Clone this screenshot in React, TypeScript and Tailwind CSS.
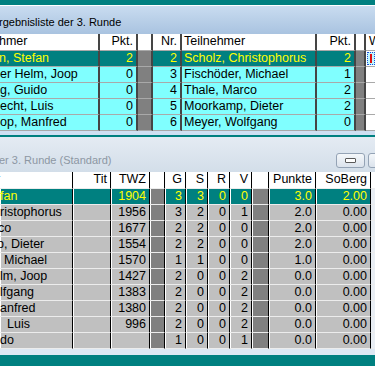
import React from 'react'

// Two overlapping grid windows (Delphi-style string grids) on a teal desktop

interface TopRow { name: string; pkt: string; nr: string; opp: string; oppPkt: string; off?: number }
interface BotRow { name: string; twz: string; g: string; s: string; r: string; v: string; pkt: string; so: string; off?: number }

const topRows: TopRow[] = [
  { name: 'n, Stefan', pkt: '2', nr: '2', opp: 'Scholz, Christophorus', oppPkt: '2', off: -1 },
  { name: 'er Helm, Joop', pkt: '0', nr: '3', opp: 'Fischöder, Michael', oppPkt: '1' },
  { name: 'g, Guido', pkt: '0', nr: '4', opp: 'Thale, Marco', oppPkt: '2' },
  { name: 'echt, Luis', pkt: '0', nr: '5', opp: 'Moorkamp, Dieter', oppPkt: '2' },
  { name: 'op, Manfred', pkt: '0', nr: '6', opp: 'Meyer, Wolfgang', oppPkt: '0' },
]

const botRows: BotRow[] = [
  { name: 'fan', twz: '1904', g: '3', s: '3', r: '0', v: '0', pkt: '3.0', so: '2.00' },
  { name: 'ristophorus', twz: '1956', g: '3', s: '2', r: '0', v: '1', pkt: '2.0', so: '0.00' },
  { name: 'co', twz: '1677', g: '2', s: '2', r: '0', v: '0', pkt: '2.0', so: '0.00', off: -2 },
  { name: 'p, Dieter', twz: '1554', g: '2', s: '2', r: '0', v: '0', pkt: '2.0', so: '0.00', off: -3 },
  { name: 'Michael', twz: '1570', g: '1', s: '1', r: '0', v: '0', pkt: '1.0', so: '0.00', off: 4 },
  { name: 'lm, Joop', twz: '1427', g: '2', s: '0', r: '0', v: '2', pkt: '0.0', so: '0.00' },
  { name: 'lfgang', twz: '1383', g: '2', s: '0', r: '0', v: '2', pkt: '0.0', so: '0.00' },
  { name: 'anfred', twz: '1380', g: '2', s: '0', r: '0', v: '2', pkt: '0.0', so: '0.00' },
  { name: 'Luis', twz: '996', g: '2', s: '0', r: '0', v: '2', pkt: '0.0', so: '0.00', off: 7 },
  { name: 'do', twz: '', g: '1', s: '0', r: '0', v: '1', pkt: '0.0', so: '0.00' },
]

const base = 'h-4 overflow-hidden whitespace-nowrap leading-[15px]'
const c1 = `${base} border-b border-b-[#a9a9a9] border-r-2 border-r-[#454545]`
const c2 = `${base} border-b border-b-[#ececec] border-r border-r-black shadow-[inset_1px_0_0_#ffffff]`

function Name({ text, off = 0 }: { text: string; off?: number }) {
  return <span className="inline-block" style={{ marginLeft: off }}>{text}</span>
}

function TopGrid() {
  return (
    <div className="grid grid-cols-[100px_38px_15px_29px_135px_39px_10px_1fr]">
      {/* header */}
      <div className={`${c1} h-[17px] bg-white`}><Name text="hmer" off={-1} /></div>
      <div className={`${c1} h-[17px] bg-white text-right pr-[3px]`}>Pkt.</div>
      <div className={`${c1} h-[17px] bg-white`} />
      <div className={`${c1} h-[17px] bg-white text-right pr-[3px]`}>Nr.</div>
      <div className={`${c1} h-[17px] bg-white pl-[2px]`}>Teilnehmer</div>
      <div className={`${c1} h-[17px] bg-white text-right pr-[3px]`}>Pkt.</div>
      <div className={`${c1} h-[17px] bg-white`} />
      <div className={`${base} h-[17px] bg-white border-b border-b-[#a9a9a9] pl-[3px]`}>W</div>

      {topRows.map((r, i) => {
        const sel = i === 0
        const cl = sel ? 'bg-[#008080] text-[#ffff00]' : 'bg-[#80ffff] text-black'
        return (
          <React.Fragment key={r.nr}>
            <div className={`${c1} ${cl}`}><Name text={r.name} off={r.off} /></div>
            <div className={`${c1} ${cl} text-right pr-[3px]`}>{r.pkt}</div>
            <div className={`${c1} bg-[#808080]`} />
            <div className={`${c1} ${cl} text-right pr-[3px]`}>{r.nr}</div>
            <div className={`${c1} ${cl} pl-[2px]`}>{r.opp}</div>
            <div className={`${c1} ${cl} text-right pr-[3px]`}>{r.oppPkt}</div>
            <div className={`${c1} bg-[#808080]`} />
            {sel ? (
              <div className={`${base} bg-white border-b border-b-[#a9a9a9] pl-px pt-px`}>
                <div className="flex h-[13px] w-[8px] items-center border border-dotted border-[#1d4fd8] bg-[#bff7ff] pl-[2px]">
                  <span className="h-[9px] w-[2px] bg-[#e01010]" />
                </div>
              </div>
            ) : (
              <div className={`${base} bg-white border-b border-b-[#a9a9a9]`} />
            )}
          </React.Fragment>
        )
      })}
    </div>
  )
}

function BotGrid() {
  const hd = `${c2} h-[17px] bg-white text-right pr-[3px]`
  return (
    <div className="grid grid-cols-[73px_38px_39px_15px_21px_22px_22px_22px_17px_47px_55px_1fr]">
      <div className={`${c2} h-[17px] bg-white`}><Name text="r" off={-4} /></div>
      <div className={hd}>Tit</div>
      <div className={hd}>TWZ</div>
      <div className={hd} />
      <div className={hd}>G</div>
      <div className={hd}>S</div>
      <div className={hd}>R</div>
      <div className={hd}>V</div>
      <div className={hd} />
      <div className={hd}>Punkte</div>
      <div className={hd}>SoBerg</div>
      <div className={`${base} h-[17px] bg-white border-b border-b-[#ececec]`} />

      {botRows.map((r, i) => {
        const sel = i === 0
        const cl = sel ? 'bg-[#008080] text-[#ffff00]' : 'bg-[#c0c0c0] text-black'
        const num = `${c2} ${cl} text-right pr-[3px]`
        return (
          <React.Fragment key={i}>
            <div className={`${c2} ${cl}`}><Name text={r.name} off={r.off} /></div>
            <div className={num} />
            <div className={num}>{r.twz}</div>
            <div className={`${c2} bg-[#808080]`} />
            <div className={num}>{r.g}</div>
            <div className={num}>{r.s}</div>
            <div className={num}>{r.r}</div>
            <div className={num}>{r.v}</div>
            <div className={`${c2} bg-[#808080]`} />
            <div className={num}>{r.pkt}</div>
            <div className={num}>{r.so}</div>
            <div className={`${base} bg-[#e9eef4] border-b border-b-[#ececec]`} />
          </React.Fragment>
        )
      })}
    </div>
  )
}

export default function App() {
  return (
    <div className="flex h-[366px] w-[375px] flex-col overflow-hidden bg-[#008080] pt-[5px] font-['Liberation_Sans',Arial,sans-serif] text-[12.5px] text-black">
      {/* Ergebnisliste window (active) */}
      <div className="border-t border-white">
        <div className="flex h-[28px] items-end bg-gradient-to-b from-[#c9dcf0] to-[#a9c3e0] pb-[4px]">
          <span className="-ml-[1px] text-[11px] leading-[15px]">rgebnisliste der 3. Runde</span>
        </div>
        <TopGrid />
        <div className="h-[4px] bg-[#cfe0f2]" />
      </div>

      <div className="h-[2px]" />

      {/* Tabelle window (inactive) */}
      <div>
        <div className="flex h-[35px] items-end bg-gradient-to-b from-[#e4ebf3] to-[#d3dee9] pb-[4px]">
          <span className="min-w-0 flex-1 -ml-[1px] text-[11px] leading-[15px] text-[#8d97a3]">er 3. Runde (Standard)</span>
          <div className="-mr-[22px] flex shrink-0 gap-[3px]">
            <div className="flex h-[15px] w-[29px] items-center justify-center rounded-[3px] border border-[#94a3b5] bg-gradient-to-b from-[#f4f7fa] to-[#dbe3ec]">
              <span className="h-[5px] w-[11px] rounded-[1px] border border-[#5a5a5a] bg-white" />
            </div>
            <div className="h-[15px] w-[29px] rounded-[3px] border border-[#94a3b5] bg-gradient-to-b from-[#f4f7fa] to-[#dbe3ec]" />
          </div>
        </div>
        <BotGrid />
        <div className="h-[6px] bg-[#dde8f3]" />
      </div>
    </div>
  )
}
